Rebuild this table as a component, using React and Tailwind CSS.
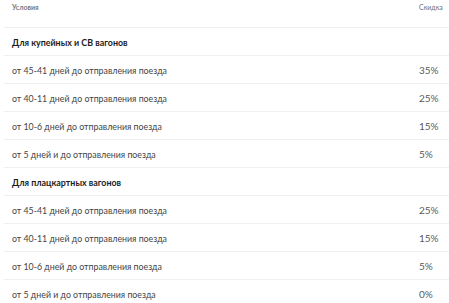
import React from "react";

const groups = [
  {
    title: "Для купейных и СВ вагонов",
    rows: [
      ["от 45-41 дней до отправления поезда", "35%"],
      ["от 40-11 дней до отправления поезда", "25%"],
      ["от 10-6 дней до отправления поезда", "15%"],
      ["от 5 дней и до отправления поезда", "5%"],
    ],
  },
  {
    title: "Для плацкартных вагонов",
    rows: [
      ["от 45-41 дней до отправления поезда", "25%"],
      ["от 40-11 дней до отправления поезда", "15%"],
      ["от 10-6 дней до отправления поезда", "5%"],
      ["от 5 дней и до отправления поезда", "0%"],
    ],
  },
];

function Row({ left, right, bold }) {
  return (
    <div className="ml-1 flex h-[28px] items-center border-b border-[#efefef] pl-2 pt-[3px]">
      <div className="flex w-full items-baseline">
        <div
          className={
            bold
              ? "flex-1 text-[8.9px] font-bold text-[#1c1c1c]"
              : "flex-1 text-[8.8px] text-[#444444]"
          }
        >
          {left}
        </div>
        <div className="w-[30px] text-[10px] leading-[12px] text-[#5a5a5a]">{right}</div>
      </div>
    </div>
  );
}

export default function App() {
  return (
    <div
      className="h-[303px] w-[449px] overflow-hidden bg-white"
      style={{ fontFamily: "Lato, Roboto, sans-serif" }}
    >
      <div className="ml-1 flex h-[28px] items-start border-b border-[#efefef] pl-2 pt-[2px]">
        <div className="flex-1 text-[7px] font-bold text-[#7a7a7a]">Условия</div>
        <div className="w-[30px] text-[7px] text-[#6a7280]">Скидка</div>
      </div>
      {groups.map((g) => (
        <React.Fragment key={g.title}>
          <Row left={g.title} bold />
          {g.rows.map(([l, r], i) => (
            <Row key={i} left={l} right={r} />
          ))}
        </React.Fragment>
      ))}
    </div>
  );
}
